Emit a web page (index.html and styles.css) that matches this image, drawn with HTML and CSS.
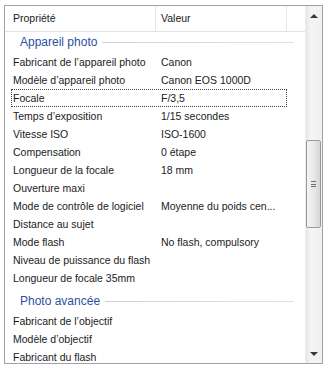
FILE: index.html
```html
<!DOCTYPE html>
<html lang="fr">
<head>
    <meta charset="UTF-8">
    <title>Propriétés</title>
    <link rel="stylesheet" href="styles.css">
</head>
<body>
    <div class="panel">
        <div class="list">
            <div class="list-head">
                <div class="head-col col-name">Propriété</div>
                <div class="head-col col-value">Valeur</div>
                <div class="head-col col-rest"></div>
            </div>
            <div class="list-body">
                <div class="group"><span>Appareil photo</span><i class="rule"></i></div>
                <div class="row"><span class="name">Fabricant de l’appareil photo</span><span class="value">Canon</span></div>
                <div class="row"><span class="name">Modèle d’appareil photo</span><span class="value">Canon EOS 1000D</span></div>
                <div class="row focused"><span class="name">Focale</span><span class="value">F/3,5</span></div>
                <div class="row"><span class="name">Temps d’exposition</span><span class="value">1/15 secondes</span></div>
                <div class="row"><span class="name">Vitesse ISO</span><span class="value">ISO-1600</span></div>
                <div class="row"><span class="name">Compensation</span><span class="value">0 étape</span></div>
                <div class="row"><span class="name">Longueur de la focale</span><span class="value">18 mm</span></div>
                <div class="row"><span class="name">Ouverture maxi</span><span class="value"></span></div>
                <div class="row"><span class="name">Mode de contrôle de logiciel</span><span class="value">Moyenne du poids cen...</span></div>
                <div class="row"><span class="name">Distance au sujet</span><span class="value"></span></div>
                <div class="row"><span class="name">Mode flash</span><span class="value">No flash, compulsory</span></div>
                <div class="row"><span class="name">Niveau de puissance du flash</span><span class="value"></span></div>
                <div class="row"><span class="name">Longueur de focale 35mm</span><span class="value"></span></div>
                <div class="group"><span>Photo avancée</span><i class="rule"></i></div>
                <div class="row"><span class="name">Fabricant de l’objectif</span><span class="value"></span></div>
                <div class="row"><span class="name">Modèle d’objectif</span><span class="value"></span></div>
                <div class="row"><span class="name">Fabricant du flash</span><span class="value"></span></div>
            </div>
        </div>
        <div class="scrollbar">
            <div class="arrow arrow-up"></div>
            <div class="track">
                <div class="thumb"><div class="grip"></div></div>
            </div>
            <div class="arrow arrow-down"></div>
        </div>
    </div>
</body>
</html>
```

FILE: styles.css
```css
* {
    margin: 0;
    padding: 0;
    box-sizing: border-box;
}
body {
    background-color: white;
    font-family: "Liberation Sans", Arial, sans-serif;
    font-size: 10.5px;
    color: #1b1b1b;
}
.panel {
    display: flex;
    width: 319px;
    height: 359px;
    margin: 5px 0 0 4px;
    border: 1px solid #a2a2a2;
    overflow: hidden;
}
.list {
    width: 300px;
    display: flex;
    flex-direction: column;
    overflow: hidden;
}
.list-head {
    display: flex;
    height: 26px;
    border-bottom: 1px solid #e3e3e3;
    flex-shrink: 0;
}
.head-col {
    display: flex;
    align-items: center;
    border-right: 1px solid #e6e6e6;
}
.col-name {
    width: 151px;
    padding-left: 8px;
    padding-bottom: 2px;
}
.col-value {
    width: 131px;
    padding-left: 5px;
    padding-bottom: 2px;
}
.col-rest {
    flex: 1;
    border-right: none;
}
.list-body {
    overflow: hidden;
}
.group {
    display: flex;
    align-items: center;
    height: 21px;
    padding-left: 15px;
    padding-right: 11px;
    padding-bottom: 2px;
    color: #2d4f9f;
    font-size: 12px;
}
.row + .group {
    margin-top: 4px;
}
.group .rule {
    flex: 1;
    height: 1px;
    margin-left: 5px;
    margin-top: 1px;
    background: linear-gradient(to right, #c9d1dd, #dfe4ea);
}
.row {
    display: flex;
    align-items: center;
    height: 18px;
    width: 276px;
    margin-left: 6px;
    white-space: nowrap;
}
.row .name {
    width: 144px;
    padding-left: 2px;
}
.row .value {
    padding-left: 6px;
}
.row.focused {
    outline: 1px dotted #444;
    outline-offset: -1px;
}
.scrollbar {
    width: 17px;
    display: flex;
    flex-direction: column;
    background: linear-gradient(to right, #e6e6e6, #f5f5f5 30%, #f0f0f0);
    border-left: 1px solid #ececec;
}
.arrow {
    height: 17px;
    display: flex;
    align-items: center;
    justify-content: center;
    flex-shrink: 0;
}
.arrow-up::before,
.arrow-down::before {
    content: "";
    border-left: 4px solid transparent;
    border-right: 4px solid transparent;
}
.arrow-up::before {
    border-bottom: 4px solid #3a3a3a;
    margin-top: 3px;
}
.arrow-down::before {
    border-top: 4px solid #3a3a3a;
    margin-bottom: 1px;
}
.track {
    flex: 1;
    padding-top: 117px;
}
.thumb {
    height: 88px;
    margin: 0 1px 0 0;
    border: 1px solid #9a9a9a;
    border-radius: 2px;
    background: linear-gradient(to right, #f4f4f4, #e9e9e9 50%, #d6d6d6);
    display: flex;
    align-items: center;
    justify-content: center;
}
.grip {
    width: 5px;
    height: 6px;
    border-top: 1px solid #6e6e6e;
    border-bottom: 1px solid #6e6e6e;
    background: linear-gradient(#6e6e6e, #6e6e6e) center / 100% 1px no-repeat;
}
```
